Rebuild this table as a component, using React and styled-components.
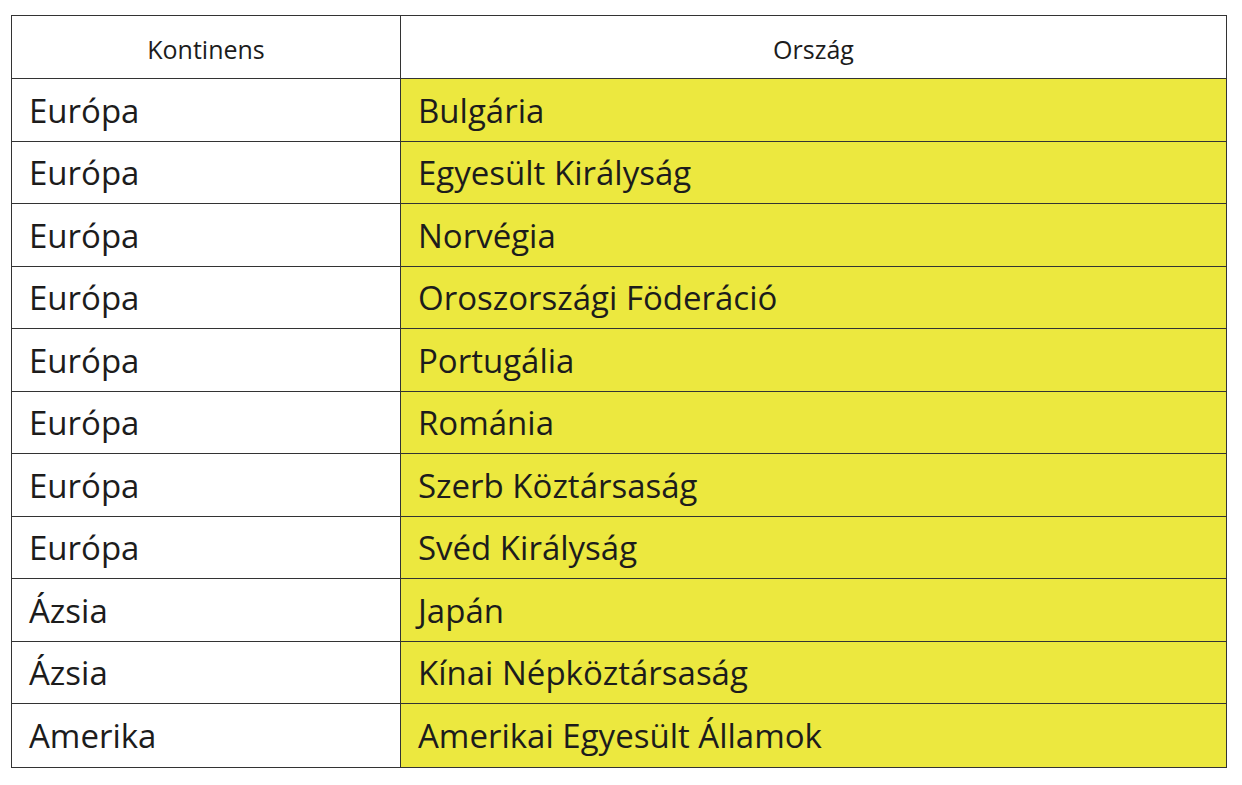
import React from "react";
import styled, { createGlobalStyle } from "styled-components";

const rows = [
	["Európa", "Bulgária"],
	["Európa", "Egyesült Királyság"],
	["Európa", "Norvégia"],
	["Európa", "Oroszországi Föderáció"],
	["Európa", "Portugália"],
	["Európa", "Románia"],
	["Európa", "Szerb Köztársaság"],
	["Európa", "Svéd Királyság"],
	["Ázsia", "Japán"],
	["Ázsia", "Kínai Népköztársaság"],
	["Amerika", "Amerikai Egyesült Államok"],
];

const GlobalStyle = createGlobalStyle`
	html, body {
		margin: 0;
		padding: 0;
		background: #ffffff;
	}
	body {
		font-family: "Open Sans", "Noto Sans", sans-serif;
		color: #1c1c1c;
	}
	* {
		box-sizing: border-box;
	}
`;

const Page = styled.div`
	padding: 15px 0 0 11px;
`;

const Grid = styled.div`
	width: 1216px;
	display: grid;
	grid-template-columns: 389px 1fr;
	grid-template-rows: 63px repeat(11, 62.5px);
	border: 1.5px solid #333;
	border-bottom-width: 1px;
`;

const HeadCell = styled.div`
	display: flex;
	align-items: center;
	justify-content: center;
	font-size: 25px;
	line-height: 1;
	padding-top: 5px;
	border-bottom: 1.5px solid #333;
	border-right: ${(p) => (p.$first ? "1.5px solid #333" : "none")};
`;

const Cell = styled.div`
	display: flex;
	align-items: center;
	font-size: 33px;
	line-height: 1;
	padding: 1px 0 0 17px;
	white-space: nowrap;
	border-bottom: ${(p) => (p.$last ? "none" : "1.5px solid #333")};
	border-right: ${(p) => (p.$first ? "1.5px solid #333" : "none")};
	background: ${(p) => (p.$highlight ? "#ece83f" : "#ffffff")};
`;

const App = () => {
	return (
		<>
			<GlobalStyle />
			<Page>
				<Grid>
					<HeadCell $first>Kontinens</HeadCell>
					<HeadCell>Ország</HeadCell>
					{rows.map(([continent, country], i) => (
						<React.Fragment key={i}>
							<Cell $first $last={i === rows.length - 1}>
								{continent}
							</Cell>
							<Cell $highlight $last={i === rows.length - 1}>
								{country}
							</Cell>
						</React.Fragment>
					))}
				</Grid>
			</Page>
		</>
	);
};

export default App;
